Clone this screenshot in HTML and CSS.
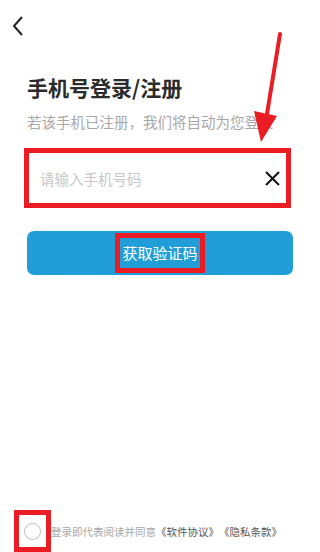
FILE: index.html
```html
<!DOCTYPE html>
<html lang="zh-CN">
<head>
  <meta charset="UTF-8" />
  <meta name="viewport" content="width=device-width, initial-scale=1.0"/>
  <title>手机号登录</title>
  <link rel="stylesheet" href="styles.css">
</head>
<body>
  <div class="page">
    <div class="topbar">
      <svg class="back" width="12" height="20" viewBox="0 0 12 20">
        <path d="M10 1 L2 10 L10 19" fill="none" stroke="#222" stroke-width="2"/>
      </svg>
    </div>

    <div class="content">
      <h1>手机号登录/注册</h1>
      <p class="hint">若该手机已注册，我们将自动为您登录</p>

      <div class="phone-field mark">
        <span class="placeholder">请输入手机号码</span>
        <svg class="clear" width="15" height="15" viewBox="0 0 15 15">
          <path d="M1 1 L14 14 M14 1 L1 14" stroke="#111" stroke-width="2"/>
        </svg>
      </div>

      <button class="code-btn"><span class="mark">获取验证码</span></button>
    </div>

    <div class="footer">
      <div class="check-wrap mark"><span class="circle"></span></div>
      <p class="terms">登录即代表阅读并同意<b>《软件协议》《隐私条款》</b></p>
    </div>
  </div>

  <!-- annotation arrow -->
  <svg class="arrow" width="320" height="552" viewBox="0 0 320 552">
    <line x1="280" y1="34" x2="267" y2="114" stroke="#ea1c24" stroke-width="4" stroke-linecap="round"/>
    <polygon points="254,111 277,116 261,142" fill="#ea1c24"/>
  </svg>
</body>
</html>
```

FILE: styles.css
```css
body {
  margin: 0;
  background: white;
  font-family: "Noto Sans CJK SC", "Noto Sans", sans-serif;
  color: #333;
  overflow: hidden;
}

.page {
  display: flex;
  flex-direction: column;
  height: 552px;
}

.topbar {
  height: 50px;
  padding: 16px 0 0 12px;
  box-sizing: border-box;
}

.back {
  display: block;
}

.content {
  padding: 0 29px 0 24px;
}

h1 {
  margin: 23px 0 0 3px;
  font-size: 21px;
  line-height: 28px;
  font-weight: bold;
  color: #2b2b2b;
}

.hint {
  margin: 11px 0 0 3px;
  font-size: 14.5px;
  line-height: 20px;
  color: #a8a8a8;
  white-space: nowrap;
}

.mark {
  border: 5px solid #ec1c24;
  box-sizing: border-box;
}

.phone-field {
  margin-top: 16px;
  height: 60px;
  display: flex;
  align-items: center;
  justify-content: space-between;
  padding: 0 6px 0 11px;
}

.placeholder {
  font-size: 14.5px;
  color: #c8c8c8;
}

.clear {
  display: block;
}

.code-btn {
  display: flex;
  justify-content: center;
  align-items: center;
  width: 266px;
  height: 44px;
  margin: 23px 0 0 3px;
  padding: 0;
  border: none;
  border-radius: 7px;
  background: #219ed8;
  font-family: inherit;
}

.code-btn .mark {
  display: block;
  padding: 0 2px;
  height: 40px;
  line-height: 30px;
  font-size: 15px;
  color: white;
}

.footer {
  margin-top: auto;
  display: flex;
  align-items: center;
  padding-left: 14px;
  height: 42px;
}

.check-wrap {
  width: 37px;
  height: 42px;
  display: flex;
  justify-content: center;
  align-items: center;
}

.circle {
  width: 17px;
  height: 17px;
  border: 1px solid #bdbdbd;
  border-radius: 50%;
  box-sizing: border-box;
}

.terms {
  margin: 0;
  font-size: 10.5px;
  color: #a8a8a8;
  white-space: nowrap;
  text-spacing-trim: space-all;
  font-feature-settings: "halt" 0, "chws" 0;
}

.terms b {
  font-weight: normal;
  font-size: 10.5px;
  color: #555;
}

.arrow {
  position: absolute;
  left: 0;
  top: 0;
  pointer-events: none;
}
```
